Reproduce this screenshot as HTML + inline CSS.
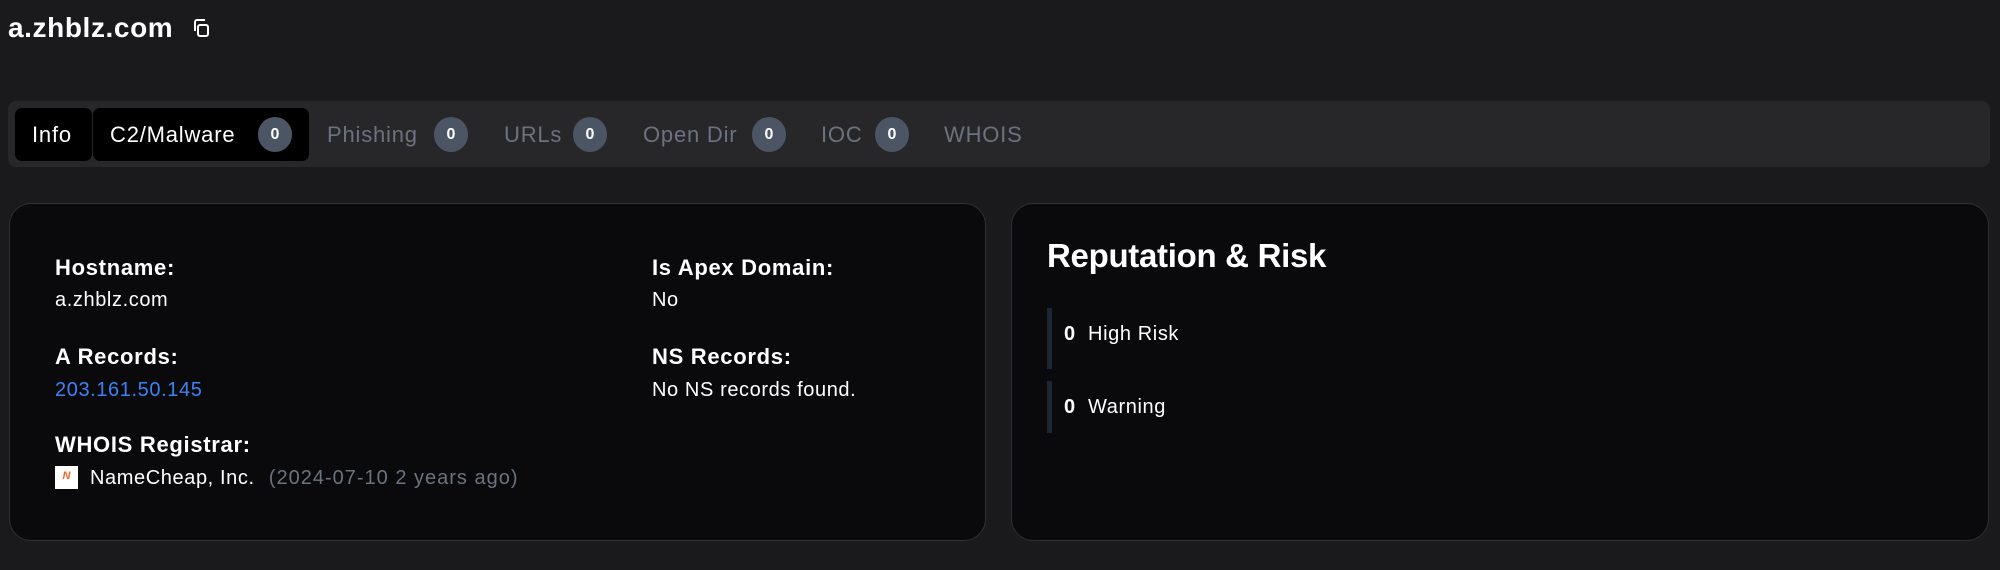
<!DOCTYPE html>
<html><head><meta charset="utf-8"><style>
*{box-sizing:border-box;margin:0;padding:0}
body{width:2000px;height:570px;background:#1a1a1d;font-family:"Liberation Sans",sans-serif;color:#fff;position:relative;overflow:hidden}
.abs{position:absolute;white-space:nowrap}
.title{left:8px;top:12px;font-size:28px;font-weight:bold;letter-spacing:0.6px}
.bar{left:8px;top:101px;width:1982px;height:66px;background:#27272a;border-radius:8px}
.tab{top:108px;height:53px;background:#000;border-radius:7px}
.t{font-size:22px;top:122px;letter-spacing:0.8px}
.g{color:#6b7280}
.badge{top:117px;width:34px;height:35px;border-radius:17px;background:#4b5563;color:#fff;font-size:16px;font-weight:bold;text-align:center;line-height:35px}
.card{background:#0a0a0c;border:1.5px solid #303034;border-radius:22px}
.lab{font-size:22px;font-weight:bold;letter-spacing:0.7px}
.val{font-size:20px;letter-spacing:0.6px}
</style></head><body>
<div class="abs title">a.zhblz.com</div>
<svg class="abs" style="left:191px;top:18px" width="20" height="20" viewBox="0 0 20 20" fill="none" stroke="#fff" stroke-width="2"><rect x="7" y="7" width="10" height="11" rx="2"/><path d="M4 13V4a2 2 0 0 1 2-2h8"/></svg>

<div class="abs bar"></div>
<div class="abs tab" style="left:15px;width:77px"></div>
<div class="abs tab" style="left:93px;width:216px"></div>
<div class="abs t" style="left:32px">Info</div>
<div class="abs t" style="left:110px">C2/Malware</div>
<div class="abs badge" style="left:258px">0</div>
<div class="abs t g" style="left:327px">Phishing</div>
<div class="abs badge" style="left:434px">0</div>
<div class="abs t g" style="left:504px">URLs</div>
<div class="abs badge" style="left:573px">0</div>
<div class="abs t g" style="left:643px">Open Dir</div>
<div class="abs badge" style="left:752px">0</div>
<div class="abs t g" style="left:821px">IOC</div>
<div class="abs badge" style="left:875px">0</div>
<div class="abs t g" style="left:944px">WHOIS</div>

<div class="abs card" style="left:9px;top:203px;width:977px;height:338px"></div>
<div class="abs lab" style="left:55px;top:255px">Hostname:</div>
<div class="abs val" style="left:55px;top:289px">a.zhblz.com</div>
<div class="abs lab" style="left:55px;top:344px">A Records:</div>
<div class="abs val" style="left:55px;top:379px;color:#3b82f6">203.161.50.145</div>
<div class="abs lab" style="left:55px;top:432px">WHOIS Registrar:</div>
<div class="abs" style="left:55px;top:466px;width:23px;height:23px;background:#fff;color:#f26522;font-size:11px;font-weight:bold;font-style:italic;text-align:center;line-height:20px">N</div>
<div class="abs val" style="left:90px;top:467px">NameCheap, Inc. <span style="color:#6b7280;margin-left:8px;letter-spacing:1px">(2024-07-10 2 years ago)</span></div>
<div class="abs lab" style="left:652px;top:255px">Is Apex Domain:</div>
<div class="abs val" style="left:652px;top:289px">No</div>
<div class="abs lab" style="left:652px;top:344px">NS Records:</div>
<div class="abs val" style="left:652px;top:379px">No NS records found.</div>

<div class="abs card" style="left:1011px;top:203px;width:978px;height:338px"></div>
<div class="abs" style="left:1047px;top:237px;font-size:33px;font-weight:bold;letter-spacing:-0.3px">Reputation &amp; Risk</div>
<div class="abs" style="left:1047px;top:308px;width:5px;height:61px;background:#1e2533"></div>
<div class="abs" style="left:1047px;top:381px;width:5px;height:52px;background:#1e2533"></div>
<div class="abs val" style="left:1064px;top:323px"><b>0</b>&nbsp; High Risk</div>
<div class="abs val" style="left:1064px;top:396px"><b>0</b>&nbsp; Warning</div>
</body></html>
